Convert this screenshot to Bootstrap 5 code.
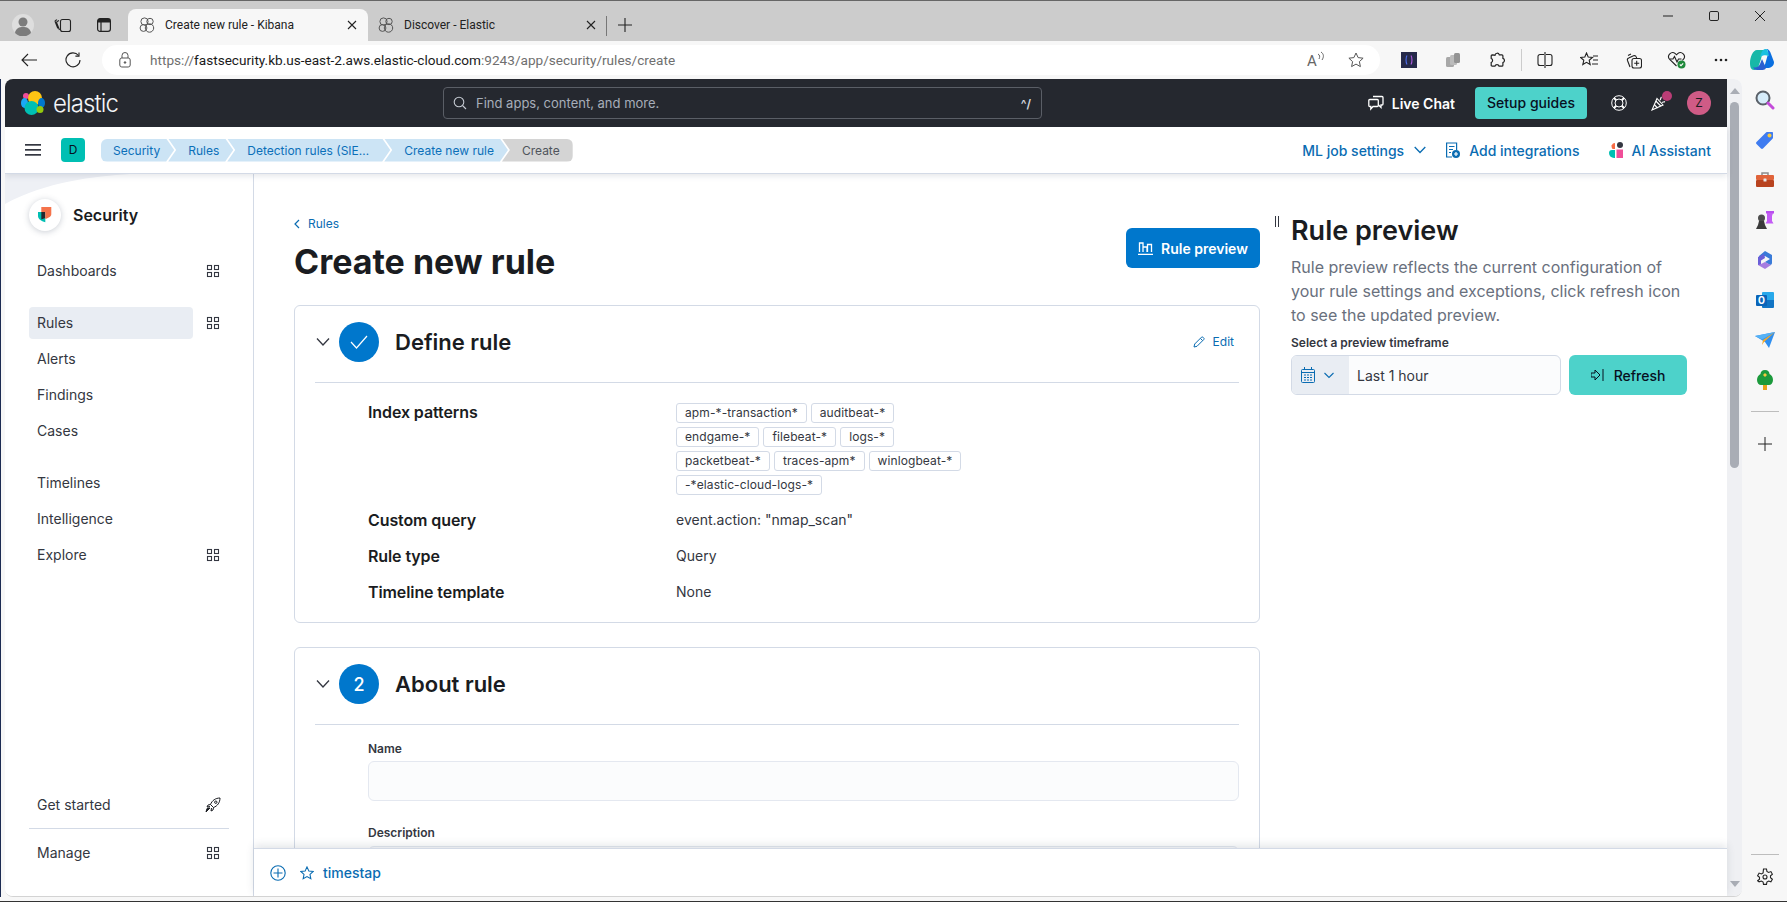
<!DOCTYPE html>
<html lang="en">
<head>
    <meta charset="UTF-8">
    <title>Create new rule - Kibana</title>
    <link href="https://cdn.jsdelivr.net/npm/bootstrap@5.3.0/dist/css/bootstrap.min.css" rel="stylesheet">
    <style>
        html, body { height: 100%; }
        body { font-family: "Inter", "Liberation Sans", sans-serif; font-size: 14px; color: #343741; background: #f7f7f7; overflow: hidden; height: 902px; }
        svg { display: block; flex: none; }

        /* browser chrome */
        .tab-strip { height: 41px; background: #cccccc; border-top: 1px solid #666; font-family: Roboto, "Liberation Sans", sans-serif; font-size: 12px; color: #222; }
        .strip-box { height: 40px; padding-top: 8px; }
        .tab-item { height: 32px; padding-left: 11px; }
        .tab-on { width: 240px; background: #f7f7f7; border-radius: 8px 8px 0 0; padding-right: 11px; margin-left: 0; }
        .tab-off { width: 232px; padding-left: 10px; padding-right: 4px; }
        .tab-name { margin-left: 10px; white-space: nowrap; }
        .tab-sep { width: 1px; height: 20px; background: #777; margin: 0 10px 5px 6px; }
        .win-btn { width: 46px; height: 30px; }
        .tool-bar { height: 38px; font-family: Roboto, "Liberation Sans", sans-serif; }
        .tool { width: 44px; height: 38px; }
        .tool-sep { width: 4px; display: flex; justify-content: center; }
        .tool-sep i { width: 1px; height: 22px; background: #ccc; }
        .addr { width: 1278px; height: 30px; margin: 0 7px; background: #fff; border-radius: 15px; padding-left: 48px; padding-right: 4px; position: relative; font-size: 13.6px; color: #6f6f6f; white-space: nowrap; }
        .addr b { font-weight: 400; color: #1a1a1a; }
        .addr-lock { position: absolute; left: 17px; top: 7px; }

        /* page frame */
        .win-row { height: 818px; border-left: 1px solid #1c2b52; padding-left: 4px; }
        .view { width: 1737px; height: 818px; border-radius: 8px; overflow: hidden; background: #fff; border-bottom: 1px solid #d3d3d3; }
        .page-col { width: 1722px; }
        .scroll-track { width: 15px; background: #eff0f3; padding-top: 9px; padding-bottom: 9px; }
        .arrow-up { width: 0; height: 0; border: 5px solid transparent; border-top: 0; border-bottom: 6px solid #a9adb5; margin: 0 auto; }
        .arrow-down { width: 0; height: 0; border: 5px solid transparent; border-bottom: 0; border-top: 6px solid #a9adb5; margin: auto auto 0; }
        .scroll-thumb { width: 9px; height: 366px; background: #a9adb5; border-radius: 5px; margin: 8px auto 0 3px; }
        .side-rail { width: 45px; height: 818px; padding-top: 1px; padding-bottom: 0; }
        .rail-ico { width: 45px; height: 40px; }
        .rail-line { width: 28px; height: 1px; background: #bdbdbd; }
        .bottom-edge { height: 1px; background: #333; margin-top: 4px; }

        /* kibana header */
        .kbn-top { height: 48px; flex: none; background: #25282f; padding: 0 16px; flex-wrap: nowrap; }
        .kbn-brand { width: 422px; color: #fff; }
        .kbn-word { font-size: 24px; font-weight: 300; margin-left: 8px; margin-top: 2px; letter-spacing: -.9px; line-height: 32px; color: #f4f5f7; }
        .kbn-search { width: 599px; height: 32px; border: 1px solid #5a5e66; border-radius: 4px; padding: 0 10px 0 9px; color: #a7aeb9; font-size: 13px; }
        .kbn-search span { margin-left: 9px; padding-top: 2px; }
        .kbn-key { font-size: 12px; font-weight: 600; color: #d5d9df; }
        .live-chat { color: #fff; font-weight: 600; font-size: 14px; }
        .btn.setup-btn { width: 112px; height: 32px; margin-left: 20px; padding: 0 0 1px; background: #4dd2ca; border: 0; border-radius: 4px; color: #07101f; font-weight: 500; font-size: 14px; }
        .head-gap { margin-left: 24px; position: relative; }
        .kbn-dot { position: absolute; top: -4px; left: 11px; width: 10px; height: 10px; border-radius: 50%; background: #ba3d76; }
        .kbn-avatar { width: 24px; height: 24px; border-radius: 50%; background: #cf5b86; color: #1a1c21; font-size: 12px; margin-left: 20px; }

        /* sub header */
        .sub-bar { height: 47px; flex: none; background: #fff; border-bottom: 1px solid #d3dae6; box-shadow: 0 2px 6px rgba(65,78,101,.14); padding: 0 16px 0 20px; position: relative; z-index: 3; }
        .space-tag { width: 24px; height: 24px; background: #00bfb3; border-radius: 4px; font-size: 12px; color: #07101f; margin-left: 20px; margin-right: 16px; }
        .crumb-item { height: 23px; line-height: 23px; font-size: 12px; padding: 0 14px 0 20px; margin-left: -6px; background: #cce4f5; color: #0b6fb9; white-space: nowrap; clip-path: polygon(0 0, calc(100% - 8px) 0, 100% 50%, calc(100% - 8px) 100%, 0 100%, 8px 50%); }
        .crumb-item.first { margin-left: 0; padding-left: 12px; border-radius: 6px 0 0 6px; clip-path: polygon(0 0, calc(100% - 8px) 0, 100% 50%, calc(100% - 8px) 100%, 0 100%); }
        .crumb-item.wide { width: 163px; }
        .crumb-item.last { background: #d4d4d4; color: #50545c; padding-right: 13px; border-radius: 0 6px 6px 0; clip-path: polygon(0 0, 100% 0, 100% 100%, 0 100%, 8px 50%); }
        .sub-link { color: #0a6cb2; font-weight: 500; font-size: 14px; text-decoration: none; white-space: nowrap; }

        /* left navigation */
        .side-nav { width: 249px; border-right: 1px solid #d3dae6; position: relative; background: #fff; padding-bottom: 25px; }
        .side-deco { position: absolute; left: 0; top: 0; }
        .side-head { margin: 25px 0 22px 24px; position: relative; font-size: 16px; font-weight: 600; color: #1a1c21; }
        .side-logo { width: 32px; height: 32px; background: #fff; border-radius: 50%; box-shadow: 0 1px 6px rgba(65,78,101,.28); margin-right: 12px; }
        .side-row { height: 36px; padding-left: 24px; }
        .side-link { width: 164px; height: 32px; line-height: 32px; padding-left: 8px; border-radius: 4px; color: #343741; text-decoration: none; }
        .side-link.active { background: #e9edf3; }
        .side-group { margin-bottom: 16px; }
        .side-grid { margin-left: 12px; }
        .side-rule { width: 200px; height: 1px; background: #d3dae6; margin: 5px 0 6px 24px; }

        /* main column */
        .work-area { min-height: 0; overflow: hidden; background: #fff; }
        .rule-col { width: 966px; margin-left: 40px; padding-top: 40px; flex: none; }
        .back-link { height: 20px; font-size: 12px; color: #0a6cb2; text-decoration: none; }
        .rule-title { font-size: 34px; font-weight: 700; line-height: 40px; color: #1a1c21; margin: 8px 0 23px; }
        .btn.preview-btn { height: 40px; width: 134px; margin-top: 14px; padding: 0; background: #07c; border: 0; border-radius: 6px; color: #fff; font-weight: 600; font-size: 14px; }
        .step-card { border: 1px solid #d3dae6; border-radius: 6px; margin-bottom: 24px; padding: 0 20px 0 20px; }
        .step-head { height: 77px; padding-bottom: 4px; border-bottom: 1px solid #d3dae6; }
        .step-num { width: 40px; height: 40px; background: #07c; border-radius: 50%; color: #fff; font-size: 18px; font-weight: 500; margin: 0 16px 0 8px; }
        .step-name { font-size: 22px; font-weight: 600; color: #1a1c21; }
        .edit-link { font-size: 12px; color: #0a6cb2; text-decoration: none; gap: 8px; }
        .step-body { padding: 17px 0 18px 53px; }
        .info-row { margin-bottom: 12px; min-height: 24px; }
        .info-row:last-child { margin-bottom: 0; }
        .info-key { width: 308px; flex: none; font-size: 16px; font-weight: 600; line-height: 24px; color: #1a1c21; letter-spacing: -.1px; }
        .info-val { line-height: 24px; }
        .tag-wrap { margin-top: 3px; margin-bottom: 1px; gap: 4px; width: 290px; }
        .badge.tag-chip { height: 20px; line-height: 18px; padding: 0 8px; border: 1px solid #d3dae6; border-radius: 3px; background: #fff; color: #343741; font-size: 12px; font-weight: 400; letter-spacing: .1px; }
        .field-label { font-size: 12px; font-weight: 600; line-height: 18px; color: #343741; margin: 0 0 3px; display: block; }
        .form-control.field-box { height: 40px; background: #fbfcfd; border: 1px solid #e4e8f0; border-radius: 6px; box-shadow: none; }
        .step-fields { padding: 15px 0 0 53px; }

        /* preview panel */
        .grip { width: 4px; height: 11px; margin: 42px 12px 0 15px; border-left: 1px solid #343741; border-right: 1px solid #343741; flex: none; }
        .preview-col { width: 396px; padding-top: 39px; flex: none; }
        .preview-title { font-size: 27px; font-weight: 600; line-height: 36px; color: #1a1c21; margin: 0 0 6px; }
        .preview-text { font-size: 16px; line-height: 24px; color: #69707d; margin: 0 0 7px; }
        .time-group { width: 270px; height: 40px; border: 1px solid #d3dae6; border-radius: 6px; overflow: hidden; background: #fbfcfd; }
        .time-pre { width: 57px; background: #e9edf3; padding-left: 9px; gap: 8px; height: 100%; }
        .time-val { padding-left: 8px; color: #343741; }
        .btn.refresh-btn { width: 118px; height: 40px; margin-left: 8px; background: #4dd2ca; border: 0; border-radius: 6px; padding: 0; color: #07101f; font-weight: 500; font-size: 14px; gap: 10px; }

        /* bottom bar */
        .time-bar { height: 48px; flex: none; background: #fff; border-top: 1px solid #d3dae6; box-shadow: 0 -3px 8px rgba(65,78,101,.14); padding-left: 16px; position: relative; z-index: 2; color: #0a6cb2; }
        .time-bar span { margin-left: 9px; font-weight: 500; }
    </style>
</head>
<body>
<!-- tab strip -->
<div class="tab-strip d-flex align-items-end">
    <div class="strip-box d-flex align-items-center justify-content-center" style="width:46px">
        <svg width="22" height="22" viewBox="0 0 22 22"><circle cx="11" cy="11" r="11" fill="#dedede"/><circle cx="11" cy="8" r="4.5" fill="#7c7c7c"/><path d="M3 19c1-5 4-6 8-6s7 1 8 6a11 11 0 0 1-16 0z" fill="#7c7c7c"/></svg>
    </div>
    <div class="strip-box d-flex align-items-center justify-content-center" style="width:34px">
        <svg width="18" height="18" viewBox="0 0 18 18" fill="none" stroke="#222" stroke-width="1.1"><rect x="6.5" y="3.5" width="10" height="12" rx="2"/><path d="M5 4.6 3.6 5.2a1.5 1.5 0 0 0-.8 2L5.5 14M3 3.6 1.6 4.5a1 1 0 0 0-.4 1.3l2.6 6.6"/></svg>
    </div>
    <div class="strip-box d-flex align-items-center justify-content-center" style="width:48px">
        <svg width="16" height="16" viewBox="0 0 16 16" fill="none" stroke="#222" stroke-width="1.2"><rect x="1.6" y="1.6" width="12.8" height="12.8" rx="2.4"/><path d="M1.6 5h12.8M5 5v9.4"/><path d="M2 2h12v3H2z" fill="#222" stroke="none"/></svg>
    </div>
    <div class="tab-item tab-on d-flex align-items-center">
        <svg width="16" height="16" viewBox="0 0 16 16" fill="none" stroke="#555" stroke-width="1"><circle cx="5.5" cy="4.5" r="3.6"/><circle cx="11" cy="4.5" r="3.2"/><circle cx="4.5" cy="11" r="3.4"/><circle cx="10.5" cy="11" r="4.2"/></svg>
        <span class="tab-name">Create new rule - Kibana</span>
        <svg class="ms-auto" width="10" height="10" viewBox="0 0 10 10" stroke="#222" stroke-width="1.1"><path d="M1 1l8 8M9 1 1 9"/></svg>
    </div>
    <div class="tab-item tab-off d-flex align-items-center">
        <svg width="16" height="16" viewBox="0 0 16 16" fill="none" stroke="#555" stroke-width="1"><circle cx="5.5" cy="4.5" r="3.6"/><circle cx="11" cy="4.5" r="3.2"/><circle cx="4.5" cy="11" r="3.4"/><circle cx="10.5" cy="11" r="4.2"/></svg>
        <span class="tab-name">Discover - Elastic</span>
        <svg class="ms-auto" width="10" height="10" viewBox="0 0 10 10" stroke="#222" stroke-width="1.1"><path d="M1 1l8 8M9 1 1 9"/></svg>
    </div>
    <div class="tab-sep"></div>
    <svg class="mb-2" width="16" height="16" viewBox="0 0 16 16" stroke="#222" stroke-width="1.1"><path d="M8 1v14M1 8h14"/></svg>
    <div class="ms-auto d-flex me-1 align-self-start">
        <div class="win-btn d-flex align-items-center justify-content-center"><svg width="10" height="10" viewBox="0 0 10 10" stroke="#222"><path d="M0 5h10"/></svg></div>
        <div class="win-btn d-flex align-items-center justify-content-center"><svg width="10" height="10" viewBox="0 0 10 10" fill="none" stroke="#222"><rect x=".5" y=".5" width="9" height="9" rx="1.4"/></svg></div>
        <div class="win-btn d-flex align-items-center justify-content-center"><svg width="10" height="10" viewBox="0 0 10 10" stroke="#222"><path d="M0 0l10 10M10 0 0 10"/></svg></div>
    </div>
</div>

<!-- address bar -->
<div class="tool-bar d-flex align-items-center">
    <div class="tool d-flex align-items-center justify-content-center" style="margin-left:7px">
        <svg width="16" height="14" viewBox="0 0 16 14" fill="none" stroke="#222" stroke-width="1.1"><path d="M16 7H1M7 1 1 7l6 6"/></svg>
    </div>
    <div class="tool d-flex align-items-center justify-content-center">
        <svg width="16" height="16" viewBox="0 0 16 16" fill="none" stroke="#222" stroke-width="1.1"><path d="M13.5 3.5A7 7 0 1 0 15 8"/><path d="M14 .5v3.6h-3.6"/></svg>
    </div>
    <div class="addr d-flex align-items-center">
        <svg class="addr-lock" width="12" height="16" viewBox="0 0 12 16" fill="none" stroke="#555"><rect x=".8" y="6" width="10.4" height="9" rx="2"/><path d="M3 6V3.5a3 3 0 0 1 6 0V6"/><circle cx="6" cy="10.5" r=".8" fill="#555"/></svg>
        <span>https://<b>fastsecurity.kb.us-east-2.aws.elastic-cloud.com</b>:9243/app/security/rules/create</span>
        <svg class="ms-auto" style="margin-right:22px" width="20" height="18" viewBox="0 0 20 18" fill="none" stroke="#666"><text x="1" y="15" font-family="Roboto, sans-serif" font-size="15" fill="#666" stroke="none">A</text><path d="M12 3c2 1 2 3 1 5M15 1c3 2 3 5 1 8"/></svg>
        <svg style="margin-right:12px" width="16" height="16" viewBox="0 0 16 16" fill="none" stroke="#555"><path d="M8 1l2.1 4.6 5 .6-3.7 3.4 1 5L8 12.1l-4.4 2.5 1-5L.9 6.200l5-.6z"/></svg>
    </div>
    <div class="tool d-flex align-items-center justify-content-center">
        <svg width="16" height="16" viewBox="0 0 16 16"><rect width="16" height="16" fill="#262a4a"/><path d="M6 3.500C4.700 5.500 4.700 10.500 6 12.500" fill="none" stroke="#4f6ff0" stroke-width="1.1"/><path d="M10 3.500c1.300 2 1.300 7 0 9" fill="none" stroke="#b05ce0" stroke-width="1.1"/></svg>
    </div>
    <div class="tool d-flex align-items-center justify-content-center">
        <svg width="16" height="16" viewBox="0 0 16 16" fill="#a8a8a8"><rect x="1" y="5" width="8" height="10" rx="1.500"/><rect x="5" y="3" width="7" height="10" rx="1.500" fill="#bcbcbc"/><rect x="9" y="1" width="6" height="10" rx="1.500" fill="#949494"/></svg>
    </div>
    <div class="tool d-flex align-items-center justify-content-center">
        <svg width="16" height="16" viewBox="0 0 16 16" fill="none" stroke="#222" stroke-width="1.2"><path d="M6 3.200a2.200 2.200 0 0 1 4.300-.4h2.600c.6 0 1 .5 1 1v2.600a2.200 2.200 0 0 1 0 4.200v2.600c0 .6-.4 1-1 1h-2.800a2.200 2.200 0 0 0-4.200 0H3.200c-.6 0-1-.4-1-1v-2.700a2.200 2.200 0 0 0 0-4.100V3.800c0-.6.400-1 1-1z"/></svg>
    </div>
    <div class="tool-sep"><i></i></div>
    <div class="tool d-flex align-items-center justify-content-center">
        <svg width="16" height="16" viewBox="0 0 16 16" fill="none" stroke="#222" stroke-width="1.1"><path d="M7 2.500H3a2 2 0 0 0-2 2v7a2 2 0 0 0 2 2h4M9 2.500h4a2 2 0 0 1 2 2v7a2 2 0 0 1-2 2H9M8 0v16"/></svg>
    </div>
    <div class="tool d-flex align-items-center justify-content-center">
        <svg width="18" height="16" viewBox="0 0 18 16" fill="none" stroke="#222" stroke-width="1.1"><path d="M6.500 1l1.700 4 4.300.4-3.300 2.900 1 4.200-3.700-2.200-3.700 2.200 1-4.200L.5 5.400 4.800 5zM13 4h5M13 8h5M12 12h6"/></svg>
    </div>
    <div class="tool d-flex align-items-center justify-content-center">
        <svg width="17" height="17" viewBox="0 0 17 17" fill="none" stroke="#222" stroke-width="1.1"><path d="M5 15 2.500 8.500A2 2 0 0 1 3.700 6L8.500 3.800a2 2 0 0 1 2.700 1.100l.5 1.100M3 3.500 6 2"/><rect x="7" y="6.500" width="9.500" height="9.500" rx="2"/><path d="M11.700 8.700v5M9.200 11.200h5"/></svg>
    </div>
    <div class="tool d-flex align-items-center justify-content-center">
        <svg width="20" height="18" viewBox="0 0 20 18" fill="none" stroke="#222" stroke-width="1.1"><path d="M9.500 15 2.700 8.400A4 4 0 0 1 8.300 2.700l1.200 1.100 1.200-1.100a4 4 0 0 1 5.600 5.700l-1 1"/><path d="M3 8h3l1.500-2.500L10 11l1.500-3h3"/><circle cx="14.500" cy="13.500" r="4" fill="#1f8a3b" stroke="none"/><path d="M12.800 13.500l1.200 1.200 2.200-2.400" stroke="#fff"/></svg>
    </div>
    <div class="tool d-flex align-items-center justify-content-center">
        <svg width="14" height="4" viewBox="0 0 14 4" fill="#222"><circle cx="2" cy="2" r="1.300"/><circle cx="7" cy="2" r="1.300"/><circle cx="12" cy="2" r="1.300"/></svg>
    </div>
    <div class="d-flex align-items-center justify-content-center" style="width:38px">
        <svg width="24" height="24" viewBox="0 0 24 24"><path d="M7 2h9c-3 1-4 5-5 9l-2 6c-1 4-3 5-5 5-3 0-4-3-4-7C0 9 3 2 7 2z" fill="#18b8a8"/><path d="M16 1c3 0 4 2 5 5l3 8c0 4-3 6-7 6h-6c3-1 4-3 5-7l2-7c.5-2 0-4-2-5z" fill="#0a6fe0"/><path d="M7 22c-2 0-3-1-4-3 2 1 5 1 7-3l2-5 4 9c-1 2-3 2-5 2z" fill="#2a5fd0"/><path d="M16 1c-3 0-4 2-5 5l-1 3c3-2 6-2 9-1l-1-4c-.5-2-1-3-2-3z" fill="#19c0e0"/></svg>
    </div>
</div>

<!-- page -->
<div class="win-row d-flex">
    <div class="view d-flex">
        <div class="page-col d-flex flex-column">
            <nav class="navbar kbn-top">
                <div class="kbn-brand d-flex align-items-center">
                    <svg width="24" height="24" viewBox="0 0 24 24"><circle cx="5" cy="5" r="3" fill="#f04e98"/><circle cx="14" cy="7" r="7" fill="#fec514"/><ellipse cx="3.500" cy="12" rx="3.500" ry="5" fill="#1ba9f5"/><ellipse cx="20.500" cy="12" rx="3.500" ry="5" fill="#0077cc"/><circle cx="10.500" cy="17" r="7" fill="#00bfb3"/><circle cx="19" cy="18.500" r="3.500" fill="#93c90e"/></svg>
                    <span class="kbn-word">elastic</span>
                </div>
                <div class="kbn-search d-flex align-items-center">
                    <svg width="14" height="14" viewBox="0 0 14 14" fill="none" stroke="#c5cad2" stroke-width="1.1"><circle cx="6" cy="6" r="4.800"/><path d="M9.500 9.500 13 13"/></svg>
                    <span>Find apps, content, and more.</span>
                    <span class="kbn-key ms-auto">^/</span>
                </div>
                <div class="ms-auto d-flex align-items-center">
                    <div class="live-chat d-flex align-items-center gap-2">
                        <svg width="16" height="16" viewBox="0 0 16 16" fill="none" stroke="#fff" stroke-width="1.300"><path d="M5 1.500h9a1 1 0 0 1 1 1V9a1 1 0 0 1-1 1h-1v2.500L10.500 10H9"/><path d="M1.800 4.500h7.500a1 1 0 0 1 1 1v5a1 1 0 0 1-1 1H5L2.800 14v-2.500h-1a1 1 0 0 1-1-1v-5a1 1 0 0 1 1-1z" fill="#25282f"/></svg>
                        <span>Live Chat</span>
                    </div>
                    <button class="btn setup-btn" type="button">Setup guides</button>
                    <div class="head-gap">
                        <svg width="16" height="16" viewBox="0 0 16 16" fill="none" stroke="#fff" stroke-width="1"><circle cx="8" cy="8" r="7.300"/><circle cx="8" cy="8" r="4"/><path d="M3 3l2.200 2.200M13 3l-2.200 2.200M3 13l2.200-2.200M13 13l-2.200-2.200" stroke-width="2"/></svg>
                    </div>
                    <div class="head-gap">
                        <svg width="16" height="16" viewBox="0 0 16 16" fill="none" stroke="#fff" stroke-width="1.100"><path d="M6 3.500 1 15l11-5z"/><path d="M3.200 9.500 6.500 13M4.800 6l5 5"/><path d="M9 5c1-1 .5-2 1.500-3M11 7.500c1-.8 2-.2 3-1"/></svg>
                        <i class="kbn-dot"></i>
                    </div>
                    <div class="kbn-avatar d-flex align-items-center justify-content-center">Z</div>
                </div>
            </nav>

            <div class="sub-bar d-flex align-items-center">
                <svg width="16" height="14" viewBox="0 0 16 14" fill="#343741"><rect y="1" width="16" height="1.700"/><rect y="6" width="16" height="1.700"/><rect y="11" width="16" height="1.700"/></svg>
                <div class="space-tag d-flex align-items-center justify-content-center">D</div>
                <div class="d-flex">
                    <div class="crumb-item first">Security</div>
                    <div class="crumb-item">Rules</div>
                    <div class="crumb-item wide">Detection rules (SIE…</div>
                    <div class="crumb-item">Create new rule</div>
                    <div class="crumb-item last">Create</div>
                </div>
                <div class="ms-auto d-flex align-items-center">
                    <a class="sub-link d-flex align-items-center" href="#">ML job settings
                        <svg style="margin-left:10px" width="12" height="8" viewBox="0 0 12 8" fill="none" stroke="#0a6cb2" stroke-width="1.300"><path d="M.7 1 6 6.500 11.300 1"/></svg>
                    </a>
                    <a class="sub-link d-flex align-items-center" style="margin-left:19px" href="#">
                        <svg style="margin-right:9px" width="15" height="16" viewBox="0 0 15 16" fill="none" stroke="#0a6cb2" stroke-width="1.200"><path d="M7 15H1.600V1h10v7"/><path d="M4 4.500h5.500M4 7.500h4M4 10.500h2"/><circle cx="11" cy="12" r="4" fill="#0a6cb2" stroke="none"/><path d="M11 10v4M9 12h4" stroke="#fff"/></svg>
                        Add integrations
                    </a>
                    <a class="sub-link d-flex align-items-center" style="margin-left:29px" href="#">
                        <svg style="margin-right:9px" width="14" height="16" viewBox="0 0 14 16"><path d="M6 7H3.500A3.500 3.500 0 0 1 6 1z" fill="#f86b45"/><circle cx="11" cy="3" r="3" fill="#343741"/><path d="M6 16H5A5 5 0 0 1 0 11 3 3 0 0 1 3 8h3z" fill="#00bfb3"/><rect x="7.500" y="7.500" width="6.500" height="8.500" fill="#f04e98"/></svg>
                        AI Assistant
                    </a>
                </div>
            </div>

            <div class="d-flex flex-grow-1" style="min-height:0">
                <div class="side-nav d-flex flex-column flex-shrink-0">
                    <svg class="side-deco" width="125" height="30" viewBox="0 0 125 30"><path d="M0 0h125C90 2 40 8 0 30z" fill="#eef0f5"/></svg>
                    <div class="side-head d-flex align-items-center">
                        <div class="side-logo d-flex align-items-center justify-content-center">
                            <svg width="14" height="16" viewBox="0 0 14 16"><path d="M0 5h7.300v10.300C3 14 0 12 0 9z" fill="#00bfb3"/><path d="M3.300 5h4v6l-4 1.500z" fill="#25282f"/><path d="M3.300 0h10v7c0 2-1.300 3.500-6 5V5h-4z" fill="#f5734b"/></svg>
                        </div>
                        Security
                    </div>
                    <div class="side-group">
                        <div class="side-row d-flex align-items-center"><a class="side-link" href="#">Dashboards</a><svg class="side-grid" width="16" height="16" viewBox="0 0 16 16" fill="none" stroke="#343741" stroke-width="1.100"><rect x="2.500" y="2.500" width="4" height="4"/><rect x="9.500" y="2.500" width="4" height="4"/><rect x="2.500" y="9.500" width="4" height="4"/><rect x="9.500" y="9.500" width="4" height="4"/></svg></div>
                    </div>
                    <div class="side-group">
                        <div class="side-row d-flex align-items-center"><a class="side-link active" href="#">Rules</a><svg class="side-grid" width="16" height="16" viewBox="0 0 16 16" fill="none" stroke="#343741" stroke-width="1.100"><rect x="2.500" y="2.500" width="4" height="4"/><rect x="9.500" y="2.500" width="4" height="4"/><rect x="2.500" y="9.500" width="4" height="4"/><rect x="9.500" y="9.500" width="4" height="4"/></svg></div>
                        <div class="side-row d-flex align-items-center"><a class="side-link" href="#">Alerts</a></div>
                        <div class="side-row d-flex align-items-center"><a class="side-link" href="#">Findings</a></div>
                        <div class="side-row d-flex align-items-center"><a class="side-link" href="#">Cases</a></div>
                    </div>
                    <div class="side-group">
                        <div class="side-row d-flex align-items-center"><a class="side-link" href="#">Timelines</a></div>
                        <div class="side-row d-flex align-items-center"><a class="side-link" href="#">Intelligence</a></div>
                        <div class="side-row d-flex align-items-center"><a class="side-link" href="#">Explore</a><svg class="side-grid" width="16" height="16" viewBox="0 0 16 16" fill="none" stroke="#343741" stroke-width="1.100"><rect x="2.500" y="2.500" width="4" height="4"/><rect x="9.500" y="2.500" width="4" height="4"/><rect x="2.500" y="9.500" width="4" height="4"/><rect x="9.500" y="9.500" width="4" height="4"/></svg></div>
                    </div>
                    <div class="mt-auto">
                        <div class="side-row d-flex align-items-center"><a class="side-link" href="#">Get started</a><svg class="side-grid" width="16" height="16" viewBox="0 0 16 16" fill="none" stroke="#1a1c21"><path d="M5.500 7.500C7 3.500 10.500 1 15 1c0 4.500-2.500 8-6.500 9.500z"/><path d="M5.500 7.500 3 8l-1 2 3-.5M8.500 10.500 8 13l-2 1 .5-3"/><circle cx="10.800" cy="5.200" r="1.200"/><path d="M5 11 1 15l1-3.500 1.500-.5z" fill="#1a1c21"/></svg></div>
                        <div class="side-rule"></div>
                        <div class="side-row d-flex align-items-center"><a class="side-link" href="#">Manage</a><svg class="side-grid" width="16" height="16" viewBox="0 0 16 16" fill="none" stroke="#343741" stroke-width="1.100"><rect x="2.500" y="2.500" width="4" height="4"/><rect x="9.500" y="2.500" width="4" height="4"/><rect x="2.500" y="9.500" width="4" height="4"/><rect x="9.500" y="9.500" width="4" height="4"/></svg></div>
                    </div>
                </div>

                <div class="d-flex flex-column flex-grow-1" style="min-width:0">
                    <div class="work-area d-flex flex-grow-1">
                        <div class="rule-col">
                            <div class="d-flex justify-content-between">
                                <div>
                                    <a class="back-link d-flex align-items-center gap-2" href="#">
                                        <svg width="6" height="10" viewBox="0 0 6 10" fill="none" stroke="#0a6cb2" stroke-width="1.200"><path d="M5 1 1 5l4 4"/></svg>
                                        Rules
                                    </a>
                                    <h1 class="rule-title">Create new rule</h1>
                                </div>
                                <button class="btn preview-btn d-flex align-items-center justify-content-center gap-2" type="button">
                                    <svg width="15" height="14" viewBox="0 0 15 14" fill="none" stroke="#fff" stroke-width="1.300"><path d="M0 13.300h15M1.500 11V2H5v9M5 11V6h4v5M9.500 11V3.500h4V11"/></svg>
                                    Rule preview
                                </button>
                            </div>

                            <div class="card step-card">
                                <div class="step-head d-flex align-items-center">
                                    <svg width="16" height="10" viewBox="0 0 16 10" fill="none" stroke="#343741" stroke-width="1.300"><path d="M2 1.500 8 8l6-6.500"/></svg>
                                    <div class="step-num d-flex align-items-center justify-content-center">
                                        <svg width="18" height="14" viewBox="0 0 18 14" fill="none" stroke="#fff" stroke-width="1.200"><path d="M1 7l5.500 6L17 1"/></svg>
                                    </div>
                                    <div class="step-name">Define rule</div>
                                    <a class="edit-link ms-auto d-flex align-items-center" href="#">
                                        <svg width="12" height="12" viewBox="0 0 12 12" fill="none" stroke="#0a6cb2"><path d="M1 11l.7-3L8.500 1.200a1 1 0 0 1 1.400 0l.9.9a1 1 0 0 1 0 1.400L4 10.300z"/><path d="M7.500 2.500l2 2"/></svg>
                                        Edit
                                    </a>
                                    <span style="width:5px"></span>
                                </div>
                                <div class="step-body">
                                    <div class="info-row d-flex">
                                        <div class="info-key">Index patterns</div>
                                        <div class="tag-wrap d-flex flex-wrap">
                                            <span class="badge tag-chip">apm-*-transaction*</span>
                                            <span class="badge tag-chip">auditbeat-*</span>
                                            <span class="badge tag-chip">endgame-*</span>
                                            <span class="badge tag-chip">filebeat-*</span>
                                            <span class="badge tag-chip">logs-*</span>
                                            <span class="badge tag-chip">packetbeat-*</span>
                                            <span class="badge tag-chip">traces-apm*</span>
                                            <span class="badge tag-chip">winlogbeat-*</span>
                                            <span class="badge tag-chip">-*elastic-cloud-logs-*</span>
                                        </div>
                                    </div>
                                    <div class="info-row d-flex"><div class="info-key">Custom query</div><div class="info-val">event.action: "nmap_scan"</div></div>
                                    <div class="info-row d-flex"><div class="info-key">Rule type</div><div class="info-val">Query</div></div>
                                    <div class="info-row d-flex"><div class="info-key">Timeline template</div><div class="info-val">None</div></div>
                                </div>
                            </div>

                            <div class="card step-card">
                                <div class="step-head d-flex align-items-center">
                                    <svg width="16" height="10" viewBox="0 0 16 10" fill="none" stroke="#343741" stroke-width="1.300"><path d="M2 1.500 8 8l6-6.500"/></svg>
                                    <div class="step-num d-flex align-items-center justify-content-center">2</div>
                                    <div class="step-name">About rule</div>
                                </div>
                                <div class="step-fields">
                                    <label class="field-label" for="ruleName">Name</label>
                                    <input class="form-control field-box" id="ruleName" type="text">
                                    <label class="field-label" for="ruleDesc" style="margin-top:23px;margin-bottom:4px">Description</label>
                                    <input class="form-control field-box" id="ruleDesc" type="text">
                                </div>
                            </div>
                        </div>

                        <div class="grip"></div>

                        <div class="preview-col">
                            <h2 class="preview-title">Rule preview</h2>
                            <p class="preview-text">Rule preview reflects the current configuration of your rule settings and exceptions, click refresh icon to see the updated preview.</p>
                            <label class="field-label">Select a preview timeframe</label>
                            <div class="d-flex">
                                <div class="time-group d-flex align-items-center">
                                    <div class="time-pre d-flex align-items-center">
                                        <svg width="14" height="16" viewBox="0 0 14 16" fill="none" stroke="#0a6cb2"><rect x=".5" y="2.500" width="13" height="13" rx="1"/><path d="M.5 5.500h13M3.500 0v3M10.500 0v3"/><path d="M3 8h2M6 8h2M9 8h2M3 10.500h2M6 10.500h2M9 10.500h2M3 13h2M6 13h2M9 13h2" stroke-width="1.200"/></svg>
                                        <svg width="12" height="7" viewBox="0 0 12 7" fill="none" stroke="#0a6cb2" stroke-width="1.100"><path d="M1.500 1 6 5.500 10.500 1"/></svg>
                                    </div>
                                    <div class="time-val">Last 1 hour</div>
                                </div>
                                <button class="btn refresh-btn d-flex align-items-center justify-content-center" type="button">
                                    <svg width="13" height="12" viewBox="0 0 13 12" fill="none" stroke="#07101f"><path d="M0 4h4V1l5 5-5 5V8H0zM12 0v12"/></svg>
                                    Refresh
                                </button>
                            </div>
                        </div>
                    </div>
                    <div class="time-bar d-flex align-items-center">
                        <svg width="16" height="16" viewBox="0 0 16 16" fill="none" stroke="#0a6cb2" stroke-width="1.100"><circle cx="8" cy="8" r="7.200"/><path d="M8 3.500v9M3.500 8h9"/></svg>
                        <svg style="margin-left:14px" width="14" height="14" viewBox="0 0 16 16" fill="none" stroke="#0a6cb2" stroke-width="1.200"><path d="M8 1l2.100 4.600 5 .6-3.700 3.400 1 5L8 12.100l-4.400 2.500 1-5L.9 6.200l5-.6z"/></svg>
                        <span>timestap</span>
                    </div>
                </div>
            </div>
        </div>
        <div class="scroll-track d-flex flex-column">
            <div class="arrow-up"></div>
            <div class="scroll-thumb"></div>
            <div class="arrow-down"></div>
        </div>
    </div>

    <div class="side-rail d-flex flex-column align-items-center">
        <div class="rail-ico d-flex align-items-center justify-content-center">
            <svg width="20" height="20" viewBox="0 0 20 20"><circle cx="8" cy="8" r="6.500" fill="#d6ecfa" stroke="#5a6068" stroke-width="2"/><path d="M13 13l5 5" stroke="#c34bd9" stroke-width="3" stroke-linecap="round"/></svg>
        </div>
        <div class="rail-ico d-flex align-items-center justify-content-center">
            <svg width="20" height="20" viewBox="0 0 20 20"><path d="M1.500 12 11 2.500c.5-.5 1-.5 1.500-.5H17c.6 0 1 .4 1 1v4.500c0 .5-.2 1-.5 1.300L8 18.500c-.6.6-1.400.6-2 0l-4.500-4.500c-.6-.6-.6-1.400 0-2z" fill="#3f7cf0"/><circle cx="14.500" cy="5.500" r="2" fill="#f7c93e"/></svg>
        </div>
        <div class="rail-ico d-flex align-items-center justify-content-center">
            <svg width="18" height="18" viewBox="0 0 18 18"><path d="M6 4V2h6v2" fill="none" stroke="#8c8c8c" stroke-width="1.500"/><rect y="4" width="18" height="5" rx="1" fill="#e0633a"/><rect y="9" width="18" height="7" rx="1" fill="#b8431f"/><rect x="7.500" y="7.500" width="3" height="3" rx=".5" fill="#e8e8e8"/></svg>
        </div>
        <div class="rail-ico d-flex align-items-center justify-content-center">
            <svg width="20" height="20" viewBox="0 0 20 20"><rect x="11" y="1" width="8" height="2.500" fill="#b94fee"/><path d="M12 3h6l-1 3v5l1.500 2.500h-8L12 11V6z" fill="#c35cf5"/><circle cx="6.500" cy="8" r="3.500" fill="#4d4d4d"/><path d="M4 11h5l1 4 2 4H1l2-4z" fill="#3b3b3b"/></svg>
        </div>
        <div class="rail-ico d-flex align-items-center justify-content-center">
            <svg width="18" height="20" viewBox="0 0 18 20"><path d="M9 1l7 4v8c0 1-1 2-2 2l-5-3 5-3-5-3-6 3V6z" fill="#3a7bd8"/><path d="M2 7v8l7 4 6-4-6-3-4 2z" fill="#a77de0"/><path d="M2 7l6-3 1 4-4 2.500V14l-3 1z" fill="#6a5fd8"/></svg>
        </div>
        <div class="rail-ico d-flex align-items-center justify-content-center">
            <svg width="18" height="18" viewBox="0 0 18 18"><rect x="6" y="1" width="12" height="15" rx="1" fill="#28a8ea"/><path d="M6 9h12v7a1 1 0 0 1-1 1H7a1 1 0 0 1-1-1z" fill="#1174c4"/><rect y="4" width="11" height="11" rx="1" fill="#0a64b8"/><text x="5.500" y="13" text-anchor="middle" font-family="Roboto, sans-serif" font-size="10" font-weight="700" fill="#fff">O</text></svg>
        </div>
        <div class="rail-ico d-flex align-items-center justify-content-center">
            <svg width="20" height="18" viewBox="0 0 20 18"><path d="M0 5 20 1l-6 16-4-6z" fill="#2f8ff0"/><path d="M0 5l20-4L7 8.500z" fill="#56b2f5"/><path d="M7 14 8 9l12-8L9 11z" fill="#f4a92a"/></svg>
        </div>
        <div class="rail-ico d-flex align-items-center justify-content-center">
            <svg width="16" height="20" viewBox="0 0 16 20"><rect x="6" y="13" width="4" height="7" fill="#e9a21c"/><path d="M8 0c3 0 4.500 2 4.500 4 2 1 3.500 3 3.500 6 0 3-2 5-4 5H4c-2 0-4-2-4-5 0-3 1.500-5 3.500-6C3.500 2 5 0 8 0z" fill="#1c9a3c"/><path d="M8 3l2 2-2 2-2-2z" fill="#f6c83e"/></svg>
        </div>
        <div class="rail-line" style="margin-top:11px"></div>
        <div class="rail-ico d-flex align-items-center justify-content-center" style="margin-top:12px">
            <svg width="14" height="14" viewBox="0 0 14 14" stroke="#222"><path d="M7 0v14M0 7h14"/></svg>
        </div>
        <div class="rail-line mt-auto"></div>
        <div class="rail-ico d-flex align-items-center justify-content-center" style="margin-top:2px">
            <svg width="16" height="18" viewBox="0 0 16 18" fill="none" stroke="#222" stroke-width="1.100"><path d="M6.500 1h3l.4 2.400 1.700 1 2.300-.8 1.500 2.600-1.900 1.500v2l1.900 1.500-1.500 2.600-2.300-.8-1.700 1-.4 2.400h-3l-.4-2.400-1.700-1-2.300.8L.6 12.700l1.900-1.500v-2L.6 7.700l1.500-2.600 2.300.8 1.700-1z"/><circle cx="8" cy="9" r="2"/></svg>
        </div>
    </div>
</div>
<div class="bottom-edge"></div>
</body>
</html>
